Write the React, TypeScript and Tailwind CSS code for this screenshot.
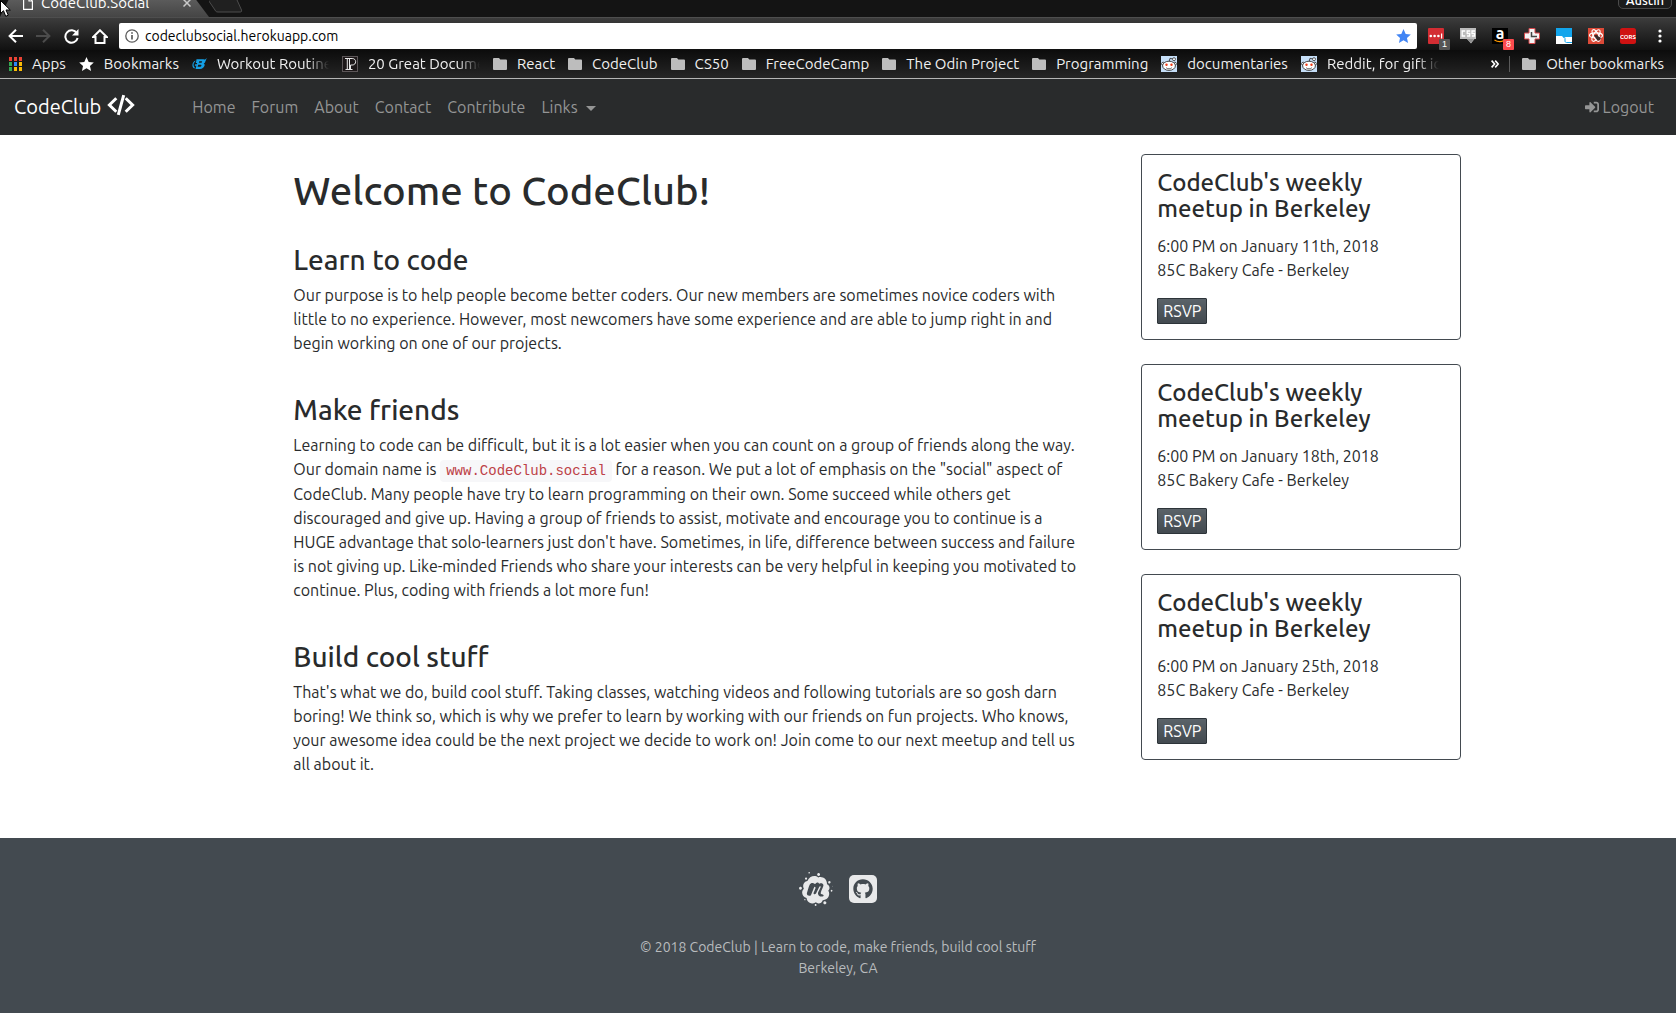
import type { ReactNode } from "react";
import { FaGithub, FaMeetup, FaSignInAlt } from "react-icons/fa";

const FolderIcon = () => (
  <svg viewBox="0 0 14 12" className="h-3 w-3.5 shrink-0" fill="#bdbdbd">
    <path d="M1 0h5l1.3 1.5H13a1 1 0 0 1 1 1V11a1 1 0 0 1-1 1H1a1 1 0 0 1-1-1V1a1 1 0 0 1 1-1z" />
  </svg>
);

const AppsIcon = () => (
  <svg viewBox="0 0 13 14" className="h-3.5 w-[13px] shrink-0">
    {["#ea4335", "#ea4335", "#ea4335", "#34a853", "#2f86f5", "#fbbc05", "#34a853", "#fbbc05", "#fbbc05"].map((c, i) => (
      <rect key={i} x={(i % 3) * 5} y={Math.floor(i / 3) * 5} width="3" height="4" fill={c} />
    ))}
  </svg>
);

const StarIcon = ({ fill }: { fill: string }) => (
  <svg viewBox="0 0 24 23" className="h-3.5 w-[15px] shrink-0" fill={fill}>
    <path d="M12 0l3.6 8.1 8.4.8-6.3 5.7 1.8 8.4L12 18.600l-7.500 4.400 1.800-8.400L0 8.900l8.400-.8z" />
  </svg>
);

const BodyIcon = () => (
  <svg viewBox="0 0 15 12" className="h-3 w-[15px] shrink-0" fill="#14a0e6">
    <path fillRule="evenodd" d="M4.500 1.200h6.800c2 0 2.700 1.200 1.900 2.700-.3.700-.8 1.200-1.500 1.500 1 .4 1.200 1.300.8 2.400C11.800 9.800 10.300 11 8 11H3.500l.9-3.300H2.800l.4-1.400h1.600l.4-1.300H3.800l.4-1.400zM7.300 3.200l-.5 1.500h2.300c1.100 0 1.500-1.500.4-1.500zM6.200 6.700l-.6 2h2.600c1.300 0 1.800-2 .5-2z" />
    <path d="M2.500 10.500C-.8 9 0 4 3.500 2.500L3.200 3.600C1.200 5 1 8 2.800 9.300z" />
    <path d="M12 2.500L14.800 0l-1.300 3z" />
  </svg>
);

const PaperIcon = () => (
  <svg viewBox="0 0 16 16" className="size-4 shrink-0">
    <rect x=".5" y=".5" width="15" height="15" fill="#1c1718" stroke="#5c5658" />
    <path d="M3 2.500h7.200c4.600 0 4.600 6.500 0 6.500H8.500v4.500M3.500 13.500h7M5.300 2.500v11M7.500 2.500v11" fill="none" stroke="#e8e8e8" strokeWidth="1" />
  </svg>
);

const RedditIcon = () => (
  <svg viewBox="0 0 16 16" className="size-4 shrink-0">
    <rect width="16" height="16" fill="#c6dff8" />
    <path d="M8 6l1-3.700 3.200.8" fill="none" stroke="#333" strokeWidth=".9" />
    <circle cx="13" cy="3.200" r="1.500" fill="#fff" stroke="#333" strokeWidth=".8" />
    <circle cx="2.200" cy="7.800" r="1.600" fill="#fff" stroke="#333" strokeWidth=".8" />
    <circle cx="13.800" cy="7.800" r="1.600" fill="#fff" stroke="#333" strokeWidth=".8" />
    <ellipse cx="8" cy="9.800" rx="6.400" ry="4.600" fill="#fff" stroke="#333" strokeWidth=".9" />
    <circle cx="5.500" cy="8.700" r="1.200" fill="#f03a17" />
    <circle cx="10.500" cy="8.700" r="1.200" fill="#f03a17" />
    <path d="M5.200 11.800c1.600 1.400 4 1.400 5.600 0" fill="none" stroke="#333" strokeWidth=".8" />
  </svg>
);

const Bookmark = ({ icon, label, fade = false }: { icon: ReactNode; label: string; fade?: boolean }) => (
  <a href="#" className="flex items-center gap-2.5 whitespace-nowrap">
    {icon}
    {fade ? (
      <span className="w-28 overflow-hidden [mask-image:linear-gradient(to_right,#000_80%,transparent)]">{label}</span>
    ) : (
      <span>{label}</span>
    )}
  </a>
);

const Badge = ({ children, className }: { children: ReactNode; className: string }) => (
  <span className={`absolute top-[11px] left-[11px] flex h-[11px] w-[11px] items-center justify-center rounded-[1px] font-['Liberation_Sans'] text-[9px] leading-none text-white ${className}`}>
    {children}
  </span>
);

const extensions: { name: string; art: ReactNode; badge?: ReactNode }[] = [
  {
    name: "Password manager",
    art: (
      <>
        <rect width="16" height="16" rx="1" fill="#d32d33" />
        <g fill="#fff">
          <circle cx="2.800" cy="8" r="1.300" />
          <circle cx="6.600" cy="8" r="1.300" />
          <circle cx="10.400" cy="8" r="1.300" />
          <rect x="13" y="5.500" width="1.200" height="5" />
        </g>
      </>
    ),
    badge: <Badge className="bg-[#555]">1</Badge>,
  },
  {
    name: "CSS viewer",
    art: (
      <>
        <path d="M0 0h16v11h-1.500L11 15.500 7 11H0z" fill="#bcbcbc" />
        <path d="M5.200 3H2.200v5h3M10.200 3H7.200v2.500h2.500V8H7M15 3h-3v2.500h2.500V8h-2.700" stroke="#fff" fill="none" strokeWidth="1.300" />
        <path d="M7 11h7l-3 3.500z" fill="#8f8f8f" />
      </>
    ),
  },
  {
    name: "Amazon assistant",
    art: (
      <>
        <rect width="16" height="16" fill="#000" />
        <text x="8" y="10.500" textAnchor="middle" fontSize="16" fontWeight="700" fill="#fff" className="font-['Ubuntu','Noto_Sans',sans-serif]">a</text>
        <path d="M2.500 12c3 2 7 2 9.800.3" stroke="#f90" strokeWidth="1.200" fill="none" />
      </>
    ),
    badge: <Badge className="bg-[#fb4b4e]">8</Badge>,
  },
  {
    name: "Blue cross",
    art: (
      <>
        <path d="M5 .5h6V5h4.500v6H11v4.500H5V11H.5V5H5z" fill="#f4f4f4" stroke="#d5494c" />
        <path d="M7.500 4v4.500H13" stroke="#444" strokeWidth="1.500" fill="none" />
      </>
    ),
  },
  {
    name: "Window resizer",
    art: (
      <>
        <rect width="16" height="16" fill="#fff" />
        <path d="M0 0h16v9H9.500c-1 0-1.500.3-2 1L6.500 8.500C6 8 5.500 8 5 8H0z" fill="#12a5ec" />
        <path d="M7.500 9c1 0 1.500.5 1.500 1.500V13c0 .8.500 1.500 1.500 1.500H16" stroke="#12a5ec" strokeWidth="1" fill="none" />
      </>
    ),
  },
  {
    name: "React tools",
    art: (
      <>
        <rect width="16" height="16" fill="#dc4a38" />
        <g fill="none" stroke="#fff" strokeWidth="1.100">
          <ellipse cx="8" cy="7.500" rx="6.500" ry="2.600" />
          <ellipse cx="8" cy="7.500" rx="6.500" ry="2.600" transform="rotate(60 8 7.500)" />
          <ellipse cx="8" cy="7.500" rx="6.500" ry="2.600" transform="rotate(120 8 7.500)" />
        </g>
        <path d="M6 7.200l3-.5 1.500 1.800 2.500 1.200-1 2.500-2.500.3-1.500-2z" fill="#3b2b2b" />
      </>
    ),
  },
  {
    name: "CORS toggle",
    art: (
      <>
        <rect width="16" height="16" rx="2.500" fill="#cf1212" />
        <text x="8" y="10.500" textAnchor="middle" fontSize="6" fontWeight="700" fill="#fff" className="font-['Ubuntu','Noto_Sans',sans-serif]">CORS</text>
      </>
    ),
  },
];

const BrowserChrome = () => (
  <header className="relative">
    <div className="relative flex h-[17px] items-end justify-between overflow-hidden bg-[#141414] pr-1">
      <div className="flex h-7 shrink-0 items-end">
        <div className="flex h-7 w-[209px] items-center gap-2 bg-linear-to-b from-[#6a6a6a] to-[#454545] pl-[23px] [clip-path:polygon(14px_0,188px_0,209px_100%,0_100%)]">
          <svg viewBox="0 0 10 13" className="h-[13px] w-2.5 shrink-0" fill="none" stroke="#fff" strokeWidth="1.200">
            <path d="M.6.6h5.400l3.400 3.400v8.400H.6zM6 .6V4h3.400" />
          </svg>
          <span className="w-[134px] text-[15px] leading-5 whitespace-nowrap text-white">CodeClub.Social</span>
          <button aria-label="Close tab" className="shrink-0">
            <svg viewBox="0 0 8 8" className="size-2" stroke="#c9c9c9" strokeWidth="1.500">
              <path d="M.5.5l7 7M7.500.5l-7 7" />
            </svg>
          </button>
        </div>
        <button aria-label="New tab" className="mb-1">
          <svg viewBox="0 0 36 24" className="h-6 w-9" fill="#202020" stroke="#4c4c4c">
            <path d="M-8 .5h30c1 0 1.500.3 2 1.500l8.500 19c.4 1.500 0 2-1.500 2H9c-1.500 0-2.500-.5-3-2z" />
          </svg>
        </button>
      </div>
      <button className="mb-2 h-6 shrink-0 rounded-[5px] border border-[#4a4a4a] bg-[#1b1b1b] px-[7px] pt-1.5 text-[13px] leading-4 font-medium text-white">Austin</button>
    </div>

    <div className="flex h-[33px] items-center border-t border-[#4e4e4e] bg-linear-to-b from-[#3c3c3c] to-[#111] pt-1 pl-2">
      <nav aria-label="Browser" className="flex w-[111px] shrink-0 items-center gap-[13px]">
        <button aria-label="Back">
          <svg viewBox="0 0 15 14" className="h-3.5 w-[15px]" fill="none" stroke="#fff" strokeWidth="2">
            <path d="M15 7H2M8 .8L1.600 7 8 13.200" />
          </svg>
        </button>
        <button aria-label="Forward">
          <svg viewBox="0 0 15 14" className="h-3.5 w-[15px]" fill="none" stroke="#4c4c4c" strokeWidth="2">
            <path d="M0 7h13M7 .8L13.400 7 7 13.200" />
          </svg>
        </button>
        <button aria-label="Reload">
          <svg viewBox="0 0 15 15" className="size-[15px]" fill="none" stroke="#fff" strokeWidth="2">
            <path d="M12.800 4.200A6.200 6.200 0 1 0 13.600 9" />
            <path d="M14.500 0v6.500H8z" fill="#fff" stroke="none" />
          </svg>
        </button>
        <button aria-label="Home page">
          <svg viewBox="0 0 16 15" className="h-[15px] w-4" fill="none" stroke="#fff" strokeWidth="2">
            <path d="M8 1.300L1.200 8H3.500v6h9V8h2.300z" />
          </svg>
        </button>
      </nav>
      <div className="flex h-[26px] grow items-center gap-1.5 rounded-[2px] bg-white px-1.5">
        <svg viewBox="0 0 14 14" className="size-3.5 shrink-0" fill="none" stroke="#5a5a5a" strokeWidth="1.300">
          <circle cx="7" cy="7" r="6.200" />
          <path d="M7 6v4.500M7 3.300v1.500" strokeWidth="1.700" />
        </svg>
        <input aria-label="Address" defaultValue="codeclubsocial.herokuapp.com" className="h-6 min-w-0 grow bg-transparent text-[14px] text-black outline-none" />
        <button aria-label="Bookmark this page">
          <StarIcon fill="#4285f4" />
        </button>
      </div>
      <div className="flex shrink-0 items-center gap-4 pl-[11px]">
        {extensions.map((e) => (
          <button key={e.name} aria-label={e.name} className="relative size-4">
            <svg viewBox="0 0 16 16" className="size-4">{e.art}</svg>
            {e.badge}
          </button>
        ))}
      </div>
      <button aria-label="Menu" className="shrink-0 px-3.5">
        <svg viewBox="0 0 4 14" className="ml-2 h-3.5 w-1" fill="#fff">
          <circle cx="2" cy="2" r="1.600" />
          <circle cx="2" cy="7" r="1.600" />
          <circle cx="2" cy="12" r="1.600" />
        </svg>
      </button>
    </div>

    <div className="flex h-[29px] items-center justify-between border-b border-[#b5b5b5] bg-linear-to-b from-[#0c0c0c] to-[#262626] pr-3 pl-[9px] text-[15px] leading-5 text-[#f0f0f0]">
      <nav aria-label="Bookmarks" className="flex items-center gap-[13px]">
        <Bookmark icon={<AppsIcon />} label="Apps" />
        <Bookmark icon={<StarIcon fill="#fff" />} label="Bookmarks" />
        <Bookmark icon={<BodyIcon />} label="Workout Routines" fade />
        <Bookmark icon={<PaperIcon />} label="20 Great Documentaries" fade />
        <Bookmark icon={<FolderIcon />} label="React" />
        <Bookmark icon={<FolderIcon />} label="CodeClub" />
        <Bookmark icon={<FolderIcon />} label="CS50" />
        <Bookmark icon={<FolderIcon />} label="FreeCodeCamp" />
        <Bookmark icon={<FolderIcon />} label="The Odin Project" />
        <Bookmark icon={<FolderIcon />} label="Programming" />
        <Bookmark icon={<RedditIcon />} label="documentaries" />
        <Bookmark icon={<RedditIcon />} label="Reddit, for gift ideas" fade />
      </nav>
      <div className="flex items-center">
        <button aria-label="More bookmarks">
          <svg viewBox="0 0 8 8" className="size-2" fill="none" stroke="#fff" strokeWidth="1.600">
            <path d="M.6.6L3.600 4l-3 3.400M4.200.6L7.200 4l-3 3.400" />
          </svg>
        </button>
        <span className="mr-3 ml-2.5 h-4 w-px bg-[#5a5a5a]" />
        <Bookmark icon={<FolderIcon />} label="Other bookmarks" />
      </div>
    </div>

    <svg viewBox="0 0 12 18" className="absolute top-0 left-0 h-[18px] w-3" fill="#fff" stroke="#000" strokeWidth="1">
      <path d="M.5.5v13l3-2.800 2.200 5.600 2.600-1.100L6 10h4.300z" />
    </svg>
  </header>
);

const navItems = ["Home", "Forum", "About", "Contact", "Contribute"];

const SiteNav = () => (
  <nav aria-label="Site" className="flex h-14 items-center bg-[#292b2c] pr-3.5 pl-3.5 text-[16px] leading-6 text-[#949595]">
    <a href="#" className="mr-[49px] flex items-center gap-1.5 text-[20px] leading-[30px] text-white">
      CodeClub
      <svg viewBox="0 0 28 22" className="mb-1 h-[22px] w-7" fill="none" stroke="currentColor" strokeWidth="3">
        <path d="M9.300 4.200L2.400 11l6.900 6.800M18.700 4.200l6.900 6.800-6.900 6.800M16.700 1.200l-5.400 19.600" />
      </svg>
    </a>
    <ul className="flex">
      {navItems.map((n) => (
        <li key={n}>
          <a href="#" className="px-2">{n}</a>
        </li>
      ))}
      <li>
        <button className="flex items-center gap-2 px-2">
          Links
          <svg viewBox="0 0 10 5" className="mt-0.5 h-[5px] w-2.5" fill="currentColor">
            <path d="M0 0h10L5 5z" />
          </svg>
        </button>
      </li>
    </ul>
    <a href="#" className="ml-auto flex items-center gap-1 px-2">
      <FaSignInAlt className="size-3.5" />
      Logout
    </a>
  </nav>
);

const Section = ({ title, children }: { title: string; children: ReactNode }) => (
  <section className="mb-[39px]">
    <h2 className="mb-2 text-[28px] leading-[31px] font-[550]">{title}</h2>
    <p>{children}</p>
  </section>
);

const MeetupCard = ({ date }: { date: string }) => (
  <article className="w-80 rounded border border-[#434a50] p-[15px]">
    <h3 className="mb-3 w-60 text-[24px] leading-[26px] font-[550]">CodeClub's weekly meetup in Berkeley</h3>
    <p>6:00 PM on {date}</p>
    <p>85C Bakery Cafe - Berkeley</p>
    <button className="mt-4 block rounded-[1px] border border-[#2d3439] bg-linear-to-b from-[#5b6369] to-[#434a50] px-[5px] leading-6 text-white">RSVP</button>
  </article>
);

export default function App() {
  return (
    <div className="flex min-h-screen flex-col bg-white font-['Ubuntu','Noto_Sans',sans-serif] text-[16px] leading-6 text-[#292b2c]">
      <BrowserChrome />
      <SiteNav />
      <main className="grid grid-cols-[2fr_6fr_4fr]">
        <div className="col-start-2 pt-[34px] pr-8 pl-3.5">
          <h1 className="mb-[31px] text-[40px] leading-[44px] font-[550]">Welcome to CodeClub!</h1>
          <Section title="Learn to code">
            Our purpose is to help people become better coders. Our new members are sometimes novice coders with little to no
            experience. However, most newcomers have some experience and are able to jump right in and begin working on one of
            our projects.
          </Section>
          <Section title="Make friends">
            Learning to code can be difficult, but it is a lot easier when you can count on a group of friends along the way.
            Our domain name is{" "}
            <code className="rounded bg-[#f7f7f9] px-1.5 py-[3px] font-['Liberation_Mono'] text-[14px] leading-[22px] text-[#bd4147]">www.CodeClub.social</code>{" "}
            for a reason. We put a lot of emphasis on the "social" aspect of CodeClub. Many people have try to learn
            programming on their own. Some succeed while others get discouraged and give up. Having a group of friends to
            assist, motivate and encourage you to continue is a HUGE advantage that solo-learners just don't have. Sometimes,
            in life, difference between success and failure is not giving up. Like-minded Friends who share your interests can
            be very helpful in keeping you motivated to continue. Plus, coding with friends a lot more fun!
          </Section>
          <Section title="Build cool stuff">
            That's what we do, build cool stuff. Taking classes, watching videos and following tutorials are so gosh darn
            boring! We think so, which is why we prefer to learn by working with our friends on fun projects. Who knows, your
            awesome idea could be the next project we decide to work on! Join come to our next meetup and tell us all about it.
          </Section>
        </div>
        <aside className="flex flex-col gap-6 pt-[19px] pl-6">
          <MeetupCard date="January 11th, 2018" />
          <MeetupCard date="January 18th, 2018" />
          <MeetupCard date="January 25th, 2018" />
        </aside>
      </main>
      <footer className="mt-[23px] flex grow flex-col items-center bg-[#434a50] pt-[34px] text-center text-[14px] leading-[21px] text-[#b9bcbe]">
        <div className="mb-[31px] flex items-center gap-4 text-[#e8e9ea]">
          <a href="#" aria-label="Meetup">
            <FaMeetup className="size-[34px]" />
          </a>
          <a href="#" aria-label="GitHub" className="flex size-7 items-center justify-center rounded-[5px] bg-[#e8e9ea] text-[#434a50]">
            <FaGithub className="size-5" />
          </a>
        </div>
        <p>© 2018 CodeClub | Learn to code, make friends, build cool stuff</p>
        <p>Berkeley, CA</p>
      </footer>
    </div>
  );
}
